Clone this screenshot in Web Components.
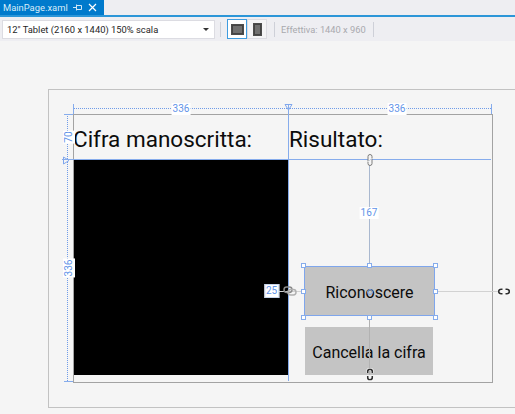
<!DOCTYPE html>
<html>
<head>
<meta charset="utf-8">
<style>
  html, body { margin: 0; height: 100%; overflow: hidden; }
  body { background: #f5f5f5; font-family: Roboto, "Noto Sans", sans-serif; display: flex; flex-direction: column; }
</style>
</head>
<body>
<vs-tabbar>MainPage.xaml</vs-tabbar>
<vs-toolbar></vs-toolbar>
<design-surface></design-surface>

<script>
// tab strip on top, with the blue line below it
class VsTabbar extends HTMLElement {
  constructor() {
    super();
    this.attachShadow({ mode: 'open' }).innerHTML = `
    <style>
    :host { display: block; height: 17px; background: #eeeef2; box-sizing: border-box; }
    .tab { display: flex; align-items: center; width: 104px; height: 15px; background: #007acc; font-size: 9.4px; padding-left: 3px; box-sizing: border-box; line-height: 15px; }
    .name { flex: 1; white-space: nowrap; color: #d8ecf8; }
    .rule { height: 2px; background: #2c96d8; }
    svg { display: block; }
    </style>
    <div class="tab">
      <span class="name"><slot></slot></span>
      <svg width="9" height="9" viewBox="0 0 9 9" fill="none" stroke="#cfe6f6"><path d="M0 4.5h3M3.5 1.5v6M3.5 2.5h5M3.5 6.5h5M8.5 2.5v4"/></svg>
      <svg width="9" height="9" viewBox="0 0 9 9" fill="none" stroke="#fff" stroke-width="1.2" style="margin-left:6px;margin-right:7px"><path d="M1 1l7 7M8 1l-7 7"/></svg>
    </div>
    <div class="rule"></div>`;
  }
}
customElements.define('vs-tabbar', VsTabbar);

const deviceIcon = (w, h, sel) => `
  <span class="btn ${sel ? 'sel' : ''}">
    <svg width="${w}" height="${h}" viewBox="0 0 ${w} ${h}"><rect x=".5" y=".5" width="${w - 1}" height="${h - 1}" fill="#444" stroke="#4c4c4c"/><rect x="2" y="2" width="${w - 4}" height="${h - 4}" fill="#707070"/></svg>
  </span>`;

// size combo, orientation buttons and effective size text
class VsToolbar extends HTMLElement {
  constructor() {
    super();
    this.attachShadow({ mode: 'open' }).innerHTML = `
    <style>
    :host { display: flex; align-items: center; height: 24px; background: #eeeef2; font-size: 9.4px; color: #1e1e1e; padding-left: 2px; }
    .combo { display: flex; align-items: center; width: 213px; height: 19px; background: #fff; border: 1px solid #dcdce2; box-sizing: border-box; padding: 0 4px; white-space: nowrap; }
    .combo span { flex: 1; }
    .arrow { width: 0; height: 0; border: 3px solid transparent; border-top: 3px solid #333; border-bottom: 0; margin-right: 1px; }
    .sep { width: 1px; height: 15px; background: #ced0d8; }
    .btn { display: flex; align-items: center; justify-content: center; width: 20px; height: 20px; box-sizing: border-box; border: 1px solid #dcdce2; background: #f4f4f6; }
    .sel { border-color: #3e9ce0; background: #fff; }
    .eff { color: #a9a9ae; margin: 0 7px 0 6px; white-space: nowrap; font-size: 9.3px; }
    </style>
    <div class="combo"><span>12" Tablet (2160 x 1440) 150% scala</span><i class="arrow"></i></div>
    <div class="sep" style="margin:0 6px 0 5px"></div>
    ${deviceIcon(13, 11, true)}
    ${deviceIcon(9, 13, false)}
    <div class="sep" style="margin-left:7px"></div>
    <span class="eff">Effettiva: 1440 x 960</span>
    <div class="sep"></div>`;
  }
}
customElements.define('vs-toolbar', VsToolbar);

// a measure label, on white
class DimLabel extends HTMLElement {
  constructor() {
    super();
    this.attachShadow({ mode: 'open' }).innerHTML = `
    <style>
    :host { position: absolute; display: flex; align-items: center; justify-content: center; background: #fff; color: #5f93e8; font-size: 10px; line-height: 1; transform: translate(-50%, -50%); padding: 1px; }
    :host([vertical]) { transform: translate(-50%, -50%) rotate(-90deg); }
    :host([boxed]) { border: 1px solid #c6d4ea; padding: 1px; }
    </style>
    <slot></slot>`;
  }
}
customElements.define('dim-label', DimLabel);

// grey XAML button
class XamlButton extends HTMLElement {
  constructor() {
    super();
    this.attachShadow({ mode: 'open' }).innerHTML = `
    <style>
    :host { position: absolute; display: flex; align-items: center; justify-content: center; background: #c4c4c4; color: #0c0c0c; font-size: 16px; white-space: nowrap; box-sizing: border-box; padding-top: 2px; }
    </style>
    <slot></slot>`;
  }
}
customElements.define('xaml-button', XamlButton);

// designer canvas: everything here sits on a free canvas, o is the height of the bars above it
const o = 41;
const handle = (x, y) => `<i class="h" style="left:${x - 2}px;top:${y - 2 - o}px"></i>`;
const line = (cls, x, y, w, h) => `<i class="${cls}" style="left:${x}px;top:${y - o}px;width:${w}px;height:${h}px"></i>`;
const chain = (x, y) => `<svg class="abs" style="left:${x}px;top:${y - o}px" width="14" height="10" viewBox="0 0 14 10" fill="none" stroke="#8a8a8a" stroke-width="1.5"><rect x="1" y="1" width="8" height="5.5" rx="2.7"/><rect x="5" y="3.5" width="8" height="5.5" rx="2.7" stroke="#b0b0b0"/></svg>`;
const link = (x, y) => `<svg class="abs" style="left:${x}px;top:${y - o}px" width="6" height="12" viewBox="0 0 6 12" fill="#f5f5f5" stroke="#7c7c7c"><path d="M5 4V2.5a2 2 0 0 0-4 0v5"/><path d="M1 8v1.5a2 2 0 0 0 4 0v-5"/></svg>`;
const broken = (x, y, rot) => `<svg class="abs" style="left:${x}px;top:${y - o}px;transform:rotate(${rot}deg)" width="12" height="7" viewBox="0 0 12 7" fill="none"><path d="M4.5 1H3a2.5 2.5 0 0 0 0 5h1.5M7.5 1H9a2.5 2.5 0 0 1 0 5H7.5" stroke="#fff" stroke-width="3"/><path d="M4.5 1.2H3a2.3 2.3 0 0 0 0 4.6h1.5M7.5 1.2H9a2.3 2.3 0 0 1 0 4.6H7.5" stroke="#2e2e2e" stroke-width="1.6"/></svg>`;

class DesignSurface extends HTMLElement {
  constructor() {
    super();
    this.attachShadow({ mode: 'open' }).innerHTML = `
    <style>
    :host { display: block; position: relative; flex: 1; background: #f5f5f5; overflow: hidden; }
    i, .abs, .t { position: absolute; display: block; }
    .frame { position: absolute; left: 48px; top: ${89 - o}px; width: 600px; height: 317px; border: 1px solid #c2c2c2; }
    .page { position: absolute; left: 73px; top: ${114 - o}px; width: 418px; height: 267px; border: 1px solid #a3a3a3; }
    .black { background: #000; }
    .blue { background: #86acec; }
    .soft { background: #d2d2d2; }
    .mid { background: #a9b8cf; }
    .grey { background: #b2b2b2; }
    .dh { border-top: 1px dotted #6f9be8; }
    .dv { border-left: 1px dotted #6f9be8; }
    .h { width: 3px; height: 3px; border: 1px solid #86acec; background: #fff; }
    .t { font-size: 22.5px; color: #0c0c0c; white-space: nowrap; line-height: 32px; }
    .sel { outline: 1px solid #7fa6ec; }
    </style>
    <div class="frame"></div>
    <div class="page"></div>
    ${line('black', 74, 160, 214, 215)}

    <span class="t" style="left:73px;top:${123 - o}px">Cifra manoscritta:</span>
    <span class="t" style="left:289px;top:${123 - o}px">Risultato:</span>

    ${line('dh', 73, 108, 418, 0)}
    ${line('dv', 67, 114, 0, 267)}
    ${line('blue', 73, 104, 1, 10)}
    ${line('blue', 491, 104, 1, 10)}
    ${line('blue', 64, 114, 9, 1)}
    ${line('blue', 64, 381, 9, 1)}
    <svg class="abs" style="left:284px;top:${104 - o}px" width="9" height="7" viewBox="0 0 9 7" fill="#f5f5f5" stroke="#7fa6ec"><path d="M1 .5h7L4.5 6z"/></svg>
    <svg class="abs" style="left:63px;top:${156 - o}px" width="7" height="9" viewBox="0 0 7 9" fill="#f5f5f5" stroke="#7fa6ec"><path d="M.5 1v7L6 4.5z"/></svg>
    <dim-label style="left:181px;top:${109 - o}px">336</dim-label>
    <dim-label style="left:397px;top:${109 - o}px">336</dim-label>
    <dim-label vertical style="left:69px;top:${137 - o}px">70</dim-label>
    <dim-label vertical style="left:69px;top:${268 - o}px">336</dim-label>

    ${line('mid', 369, 160, 1, 107)}
    ${line('grey', 369, 315, 1, 12)}
    ${line('soft', 434, 291, 64, 1)}
    ${line('soft', 278, 291, 26, 1)}
    <dim-label style="left:369px;top:${213 - o}px">167</dim-label>

    ${line('blue', 62, 159, 429, 1)}
    ${line('blue', 288, 105, 1, 276)}

    <xaml-button class="sel" style="left:305px;top:${267 - o}px;width:129px;height:48px">Riconoscere</xaml-button>
    <xaml-button style="left:305px;top:${327 - o}px;width:128px;height:48px">Cancella la cifra</xaml-button>
    ${line('grey', 369, 327, 1, 48)}

    ${handle(303, 265)}${handle(369, 265)}${handle(435, 265)}
    ${handle(303, 291)}${handle(435, 291)}
    ${handle(303, 317)}${handle(369, 317)}${handle(435, 317)}
    <i style="left:367px;top:${289 - o}px;width:4px;height:4px;border-radius:50%;border:1px solid #7fa6ec"></i>

    <dim-label boxed style="left:271.5px;top:${291 - o}px">25</dim-label>
    ${chain(283, 286)}
    ${link(367, 154)}
    ${broken(498, 288, 0)}
    ${broken(364, 371, 90)}`;
  }
}
customElements.define('design-surface', DesignSurface);
</script>
</body>
</html>
